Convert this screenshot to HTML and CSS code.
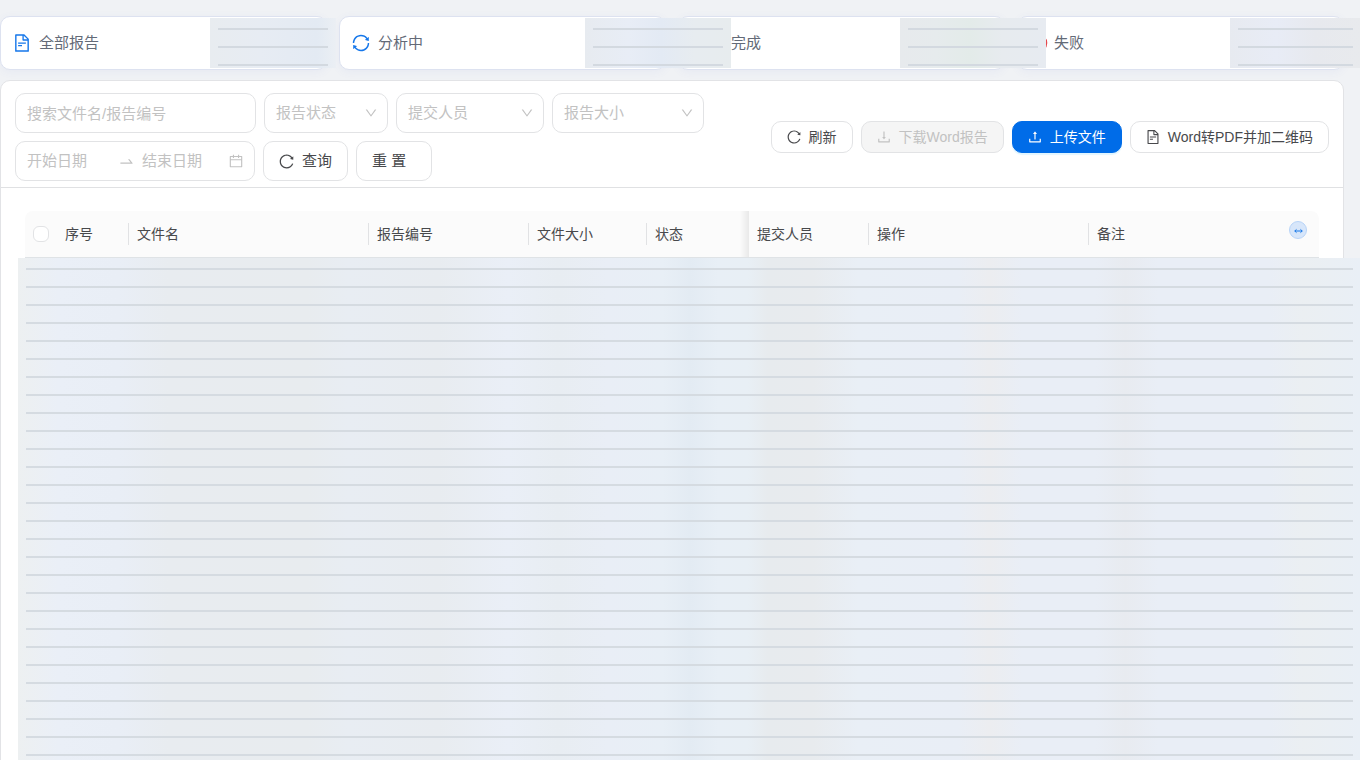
FILE: index.html
```html
<!DOCTYPE html>
<html lang="zh-CN">
<head>
<meta charset="utf-8">
<title>报告列表</title>
<link rel="stylesheet" href="styles.css">
</head>
<body>
<svg class="defs" width="0" height="0">
  <symbol id="file" viewBox="0 0 1024 1024"><path d="M854.6 288.6L639.4 73.4c-6-6-14.1-9.4-22.6-9.4H192c-17.7 0-32 14.3-32 32v832c0 17.7 14.3 32 32 32h640c17.7 0 32-14.3 32-32V311.3c0-8.5-3.4-16.7-9.4-22.7zM790.2 326H602V137.8L790.2 326zm1.8 562H232V136h302v216a42 42 0 0042 42h216v494zM504 618H320c-4.4 0-8 3.6-8 8v48c0 4.4 3.6 8 8 8h184c4.4 0 8-3.6 8-8v-48c0-4.4-3.6-8-8-8zM312 490v48c0 4.4 3.6 8 8 8h384c4.4 0 8-3.6 8-8v-48c0-4.4-3.6-8-8-8H320c-4.4 0-8 3.6-8 8z"/></symbol>
  <symbol id="sync" viewBox="0 0 1024 1024"><path d="M168 504.2c1-43.7 10-86.1 26.9-126 17.3-41 42.1-77.7 73.7-109.4S337 212.3 378 195c42.4-17.9 87.4-27 133.9-27s91.5 9.1 133.8 27A341.5 341.5 0 01755 268.8c9.9 9.9 19.2 20.4 27.8 31.4l-60.2 47a8 8 0 003 14.1l175.7 43c5 1.2 9.9-2.6 9.9-7.7l.8-180.9c0-6.7-7.7-10.5-12.9-6.3l-56.4 44.1C765.8 155.1 646.2 92 511.8 92 282.7 92 96.3 275.6 92 503.8a8 8 0 008 8.2h60c4.4 0 7.9-3.5 8-7.8zm756 7.8h-60c-4.4 0-7.9 3.5-8 7.8-1 43.7-10 86.1-26.9 126-17.3 41-42.1 77.8-73.7 109.4A342.45 342.45 0 01512.1 856a342.24 342.24 0 01-243.2-100.8c-9.9-9.9-19.2-20.4-27.8-31.4l60.2-47a8 8 0 00-3-14.1l-175.7-43c-5-1.2-9.9 2.6-9.9 7.7l-.7 181c0 6.7 7.7 10.5 12.9 6.3l56.4-44.1C258.2 868.9 377.8 932 512.2 932c229.2 0 415.5-183.7 419.8-411.8a8 8 0 00-8-8.2z"/></symbol>
  <symbol id="reload" viewBox="0 0 1024 1024"><path d="M909.1 209.3l-56.4 44.1C775.8 155.1 656.2 92 521.9 92 290 92 102.3 279.5 102 511.5 101.7 743.7 289.8 932 521.9 932c181.3 0 335.8-115 394.6-276.1 1.5-4.2-.7-8.9-4.9-10.3l-56.7-19.5a8 8 0 00-10.1 4.8c-1.8 5-3.8 10-5.9 14.9-17.3 41-42.1 77.8-73.7 109.4A344.77 344.77 0 01655.9 829c-42.3 17.9-87.4 27-133.8 27-46.5 0-91.5-9.1-133.8-27A341.5 341.5 0 01279 755.2a342.16 342.16 0 01-73.7-109.4c-17.9-42.4-27-87.4-27-133.9s9.1-91.5 27-133.9c17.3-41 42.1-77.8 73.7-109.4 31.6-31.6 68.4-56.4 109.3-73.8 42.3-17.9 87.4-27 133.8-27 46.5 0 91.5 9.1 133.8 27a341.5 341.5 0 01109.3 73.8c9.9 9.9 19.2 20.4 27.8 31.4l-60.2 47a8 8 0 003 14.1l175.6 43c5 1.2 9.9-2.6 9.9-7.7l.8-180.9c-.1-6.6-7.8-10.3-13-6.2z"/></symbol>
  <symbol id="down" viewBox="0 0 1024 1024"><path d="M884 256h-75c-5.1 0-9.9 2.5-12.9 6.6L512 654.2 227.9 262.6c-3-4.1-7.8-6.6-12.9-6.6h-75c-6.5 0-10.3 7.4-6.5 12.7l352.6 486.1c12.8 17.6 39 17.6 51.7 0l352.6-486.1c3.9-5.3.1-12.7-6.4-12.7z"/></symbol>
  <symbol id="swap" viewBox="0 0 1024 1024"><path d="M873.1 596.2l-164-208A32 32 0 00684 376h-64.8c-6.7 0-10.4 7.7-6.3 13l144.3 183H152c-4.4 0-8 3.6-8 8v60c0 4.4 3.6 8 8 8h695.9c26.8 0 41.7-30.8 25.2-51.8z"/></symbol>
  <symbol id="calendar" viewBox="0 0 1024 1024"><path d="M880 184H712v-64c0-4.4-3.6-8-8-8h-56c-4.4 0-8 3.6-8 8v64H384v-64c0-4.4-3.6-8-8-8h-56c-4.4 0-8 3.6-8 8v64H144c-17.7 0-32 14.3-32 32v664c0 17.7 14.3 32 32 32h736c17.7 0 32-14.3 32-32V216c0-17.7-14.3-32-32-32zm-40 656H184V460h656v380zM184 392V256h128v48c0 4.4 3.6 8 8 8h56c4.4 0 8-3.6 8-8v-48h256v48c0 4.4 3.6 8 8 8h56c4.4 0 8-3.6 8-8v-48h128v136H184z"/></symbol>
  <symbol id="download" viewBox="0 0 1024 1024"><path d="M505.7 661a8 8 0 0012.6 0l112-141.7c4.1-5.2.4-12.9-6.3-12.9h-74.1V168c0-4.4-3.6-8-8-8h-60c-4.4 0-8 3.6-8 8v338.3H400c-6.7 0-10.4 7.7-6.3 12.9l112 141.8zM878 626h-60c-4.4 0-8 3.6-8 8v154H214V634c0-4.4-3.6-8-8-8h-60c-4.4 0-8 3.6-8 8v198c0 17.7 14.3 32 32 32h684c17.7 0 32-14.3 32-32V634c0-4.4-3.6-8-8-8z"/></symbol>
  <symbol id="upload" viewBox="0 0 1024 1024"><path d="M400 317.7h73.9V656c0 4.4 3.6 8 8 8h60c4.4 0 8-3.6 8-8V317.7H624c6.7 0 10.4-7.7 6.3-12.9L518.3 163a8 8 0 00-12.6 0l-112 141.7c-4.1 5.3-.4 13 6.3 13zM878 626h-60c-4.4 0-8 3.6-8 8v154H214V634c0-4.4-3.6-8-8-8h-60c-4.4 0-8 3.6-8 8v198c0 17.7 14.3 32 32 32h684c17.7 0 32-14.3 32-32V634c0-4.4-3.6-8-8-8z"/></symbol>
</svg>

<div class="stats">
  <div class="stat"><svg class="icon stat-icon"><use href="#file"/></svg><span>全部报告</span><i class="veil veil-all"></i></div>
  <div class="stat"><svg class="icon stat-icon"><use href="#sync"/></svg><span>分析中</span><i class="veil veil-running"></i></div>
  <div class="stat stat-done"><span class="stat-icon"></span><span>完成</span><i class="veil veil-done"></i></div>
  <div class="stat stat-failed"><svg class="stat-icon" viewBox="0 0 20 20"><circle cx="10" cy="10" r="8.5" fill="none" stroke="#e5484d" stroke-width="1.6"/></svg><span>失败</span><i class="veil veil-failed"></i></div>
</div>

<main class="panel">
  <header class="toolbar">
    <div class="filters">
      <div class="filter-row">
        <div class="field search">搜索文件名/报告编号</div>
        <div class="field select-status">报告状态<svg class="icon arrow"><use href="#down"/></svg></div>
        <div class="field select-person">提交人员<svg class="icon arrow"><use href="#down"/></svg></div>
        <div class="field select-size">报告大小<svg class="icon arrow"><use href="#down"/></svg></div>
      </div>
      <div class="filter-row">
        <div class="field range"><span class="date">开始日期</span><svg class="icon swap"><use href="#swap"/></svg><span>结束日期</span><svg class="icon calendar"><use href="#calendar"/></svg></div>
        <div class="button large query"><svg class="icon"><use href="#reload"/></svg>查询</div>
        <div class="button large reset">重 置</div>
      </div>
    </div>
    <div class="actions">
      <div class="button"><svg class="icon"><use href="#reload"/></svg>刷新</div>
      <div class="button disabled"><svg class="icon"><use href="#download"/></svg>下载Word报告</div>
      <div class="button primary"><svg class="icon"><use href="#upload"/></svg>上传文件</div>
      <div class="button"><svg class="icon"><use href="#file"/></svg>Word转PDF并加二维码</div>
    </div>
  </header>
  <section class="table">
    <div class="thead">
      <div class="th th-check"><span class="checkbox"></span></div>
      <div class="th th-index">序号</div>
      <div class="th th-file">文件名</div>
      <div class="th th-number">报告编号</div>
      <div class="th th-size">文件大小</div>
      <div class="th th-status">状态</div>
      <div class="th th-person">提交人员</div>
      <div class="th th-action">操作</div>
      <div class="th th-note">备注<span class="resize"><svg viewBox="0 0 10 6"><path d="M.8 3h8.4M2.8 1.2L.9 3l1.9 1.8M7.2 1.2L9.1 3 7.2 4.8"/></svg></span></div>
    </div>
    <div class="table-body"></div>
  </section>
</main>
</body>
</html>
```
FILE: styles.css
```css
* { box-sizing: border-box; }
body {
  margin: 0;
  height: 760px;
  overflow: hidden;
  padding-top: 16px;
  background: #f0f2f5;
  font: 14px/22px "Liberation Sans", "Noto Sans CJK SC", sans-serif;
  color: #48494c;
}
.defs { position: absolute; }
.icon { width: 16px; height: 16px; margin: 0 -1px; fill: currentColor; flex: none; }

.stats {
  display: grid;
  grid-template-columns: repeat(4, 1fr);
  gap: 12px;
  width: 1344px;
  height: 54px;
}
.stat {
  position: relative;
  display: flex;
  align-items: center;
  gap: 8px;
  padding-left: 12px;
  border: 1px solid #dde2f0;
  border-radius: 10px;
  background: #fff;
  box-shadow: 0 2px 10px rgba(80, 100, 200, .06);
  color: #636a77;
  font-size: 15px;
}
.stat-icon { width: 20px; height: 20px; margin: 0 -1px; color: #1677ea; flex: none; }
.stat-done { padding-left: 26px; }
.stat-failed { padding-left: 11px; gap: 7px; }

/* Striped veils over masked values */
.veil {
  position: absolute;
  z-index: 2;
  top: 1px;
  height: 50px;
}
.veil::after {
  content: "";
  position: absolute;
  inset: 10px 8px 0;
  background: repeating-linear-gradient(#d3d9e0 0 2px, transparent 2px 18px);
}
.veil-all { left: 209px; width: 126px; background: linear-gradient(90deg, #e8ecf0, #e7ecf3 40%, #e3eaf3 85%, #ebeff4); }
.veil-running { left: 245px; width: 146px; background: linear-gradient(90deg, #e7ebf0, #e8edf6 30%, #e3eaf4 52%, #e7ecf0 75%, #e7ecee); }
.veil-done { left: 221px; width: 146px; background: linear-gradient(90deg, #e7eaed, #e6ebed 25%, #e3ebe9 48%, #e7ebef 70%, #e7ebf1); }
.veil-failed { left: 212px; width: 131px; background: linear-gradient(90deg, #e7eaf0, #e8ecf6 35%, #e7e9ee 65%, #e8eaed); }

.panel {
  width: 1344px;
  height: 700px;
  margin-top: 10px;
  border: 1px solid #e2e3e6;
  border-radius: 10px;
  background: #fff;
}
.toolbar {
  display: flex;
  justify-content: space-between;
  align-items: center;
  height: 107px;
  padding: 6px 14px 0;
  border-bottom: 1px solid #e0e1e3;
}
.filters { display: flex; flex-direction: column; gap: 8px; }
.filter-row { display: flex; gap: 8px; }
.field {
  display: flex;
  align-items: center;
  height: 40px;
  padding: 0 11px;
  border: 1px solid #e2e3e5;
  border-radius: 10px;
  color: #c2c2c2;
  font-size: 15px;
}
.search { width: 241px; padding-top: 2px; }
.select-status { width: 124px; }
.select-person { width: 148px; }
.select-size { width: 152px; }
.arrow { width: 14px; height: 14px; margin: 0 -2px 0 auto; }
.range { width: 240px; }
.date { width: 91px; }
.swap { width: 17px; height: 17px; margin: 0 7px 0 0; }
.calendar { margin: 0 -1px 0 auto; }

.actions { display: flex; gap: 8px; }
.button {
  display: flex;
  align-items: center;
  gap: 8px;
  height: 32px;
  padding: 0 15px;
  border: 1px solid #e2e3e5;
  border-radius: 10px;
  background: #fff;
  white-space: nowrap;
}
.large { height: 40px; font-size: 15px; }
.large .icon { width: 17px; height: 17px; }
.reset { width: 76px; }
.disabled { background: #f5f5f5; color: #c2c2c2; }
.primary {
  border-color: #006ce8;
  background: #006ce8;
  color: #fff;
  box-shadow: 0 2px 1px #e1f5ff;
}

.table { padding: 23px 24px 0; }
.thead {
  display: flex;
  width: 1294px;
  height: 47px;
  border-bottom: 1px solid #dfe3e6;
  border-radius: 8px 8px 0 0;
  background: #fbfbfb;
}
.th { position: relative; padding: 12px 8px; flex: none; }
.th:not(:first-child):not(:last-child)::after {
  content: "";
  position: absolute;
  right: 0;
  top: 12px;
  width: 1px;
  height: 22px;
  background: #e1e2e4;
}
.th-check { width: 32px; }
.th-index { width: 72px; }
.th-file { width: 240px; }
.th-number { width: 160px; }
.th-size { width: 118px; }
.th-status { width: 102px; }
.th-status:not(:first-child):not(:last-child)::after {
  top: 0;
  width: 9px;
  height: 46px;
  background: linear-gradient(90deg, #fbfbfb, #e9e9e9);
}
.th-person { width: 120px; }
.th-action { width: 220px; }
.th-note { flex: 1; }
.checkbox {
  display: block;
  width: 16px;
  height: 16px;
  margin-top: 3px;
  border: 1px solid #e2e3e5;
  border-radius: 6px;
  background: #fff;
}
.resize {
  position: absolute;
  right: 12px;
  top: 10px;
  display: grid;
  place-items: center;
  width: 18px;
  height: 18px;
  border: 1px solid #b8d4f8;
  border-radius: 50%;
  background: #d7e6fa;
}
.resize svg { width: 9px; height: 6px; margin-top: 2px; fill: none; stroke: #1677e8; stroke-width: 1.1; }
.table-body {
  width: 1343px;
  height: 502px;
  margin-left: -7px;
  background:
    repeating-linear-gradient(#d5dbe1 0 2px, transparent 2px 18px) 8px 10px / 1327px 492px no-repeat,
    linear-gradient(90deg, #edf0f1 0, #eaeff7 40px, #e9eef6 100px, #e8ecf0 150px, #e8ecef 290px,
      #e8edf3 330px, #e8ecf0 420px, #eaeff7 490px, #e8edf2 540px, #e9eef6 590px, #e8eff6 645px,
      #e3ebf3 672px, #e8eff6 700px, #e8eff5 730px, #e7ebee 750px, #e8ebee 795px, #e9eff6 840px,
      #e9eef6 940px, #ecedf0 972px, #e9eef6 1004px, #e9eef6 1078px, #e8ebf0 1107px, #e9eef6 1140px,
      #e9eef6 1250px, #ebeff2 1285px, #e9eff6 1342px);
}
```
